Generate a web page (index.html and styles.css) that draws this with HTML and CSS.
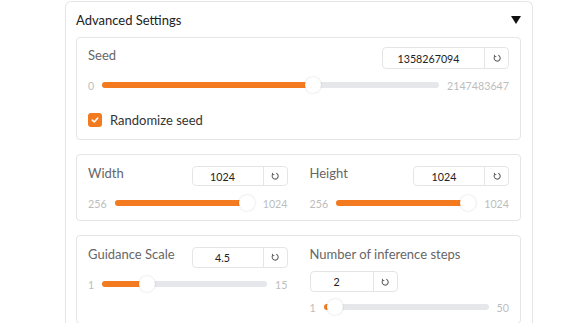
FILE: index.html
```html
<!DOCTYPE html>
<html lang="en">
<head>
    <meta charset="UTF-8">
    <title>Advanced Settings</title>
    <link rel="stylesheet" href="styles.css">
</head>
<body>
    <div class="page">
        <div class="accordion">
            <!-- Accordion header -->
            <div class="accordion-head">
                <span class="accordion-title">Advanced Settings</span>
                <span class="caret"></span>
            </div>

            <!-- Seed -->
            <div class="panel panel-seed">
                <div class="field-head">
                    <span class="field-label">Seed</span>
                    <div class="number-box">
                        <span class="number-value value-seed">1358267094</span>
                        <span class="reset-btn">
                            <svg width="8" height="8" viewBox="0 0 8 8"><path d="M5.2 1.3 A3 3 0 1 1 1.6 2.6 M1.4 0.9 L1.6 2.7 L3.3 2.5"/></svg>
                        </span>
                    </div>
                </div>
                <div class="slider">
                    <span class="slider-min">0</span>
                    <div class="track" style="--p: 0.6325">
                        <div class="fill"></div>
                        <span class="thumb"></span>
                    </div>
                    <span class="slider-max">2147483647</span>
                </div>
                <label class="checkbox-row">
                    <span class="checkbox">
                        <svg width="10" height="10" viewBox="0 0 10 10"><path d="M2.3 5.2 L4.2 7 L7.8 3"/></svg>
                    </span>
                    Randomize seed
                </label>
            </div>

            <!-- Width / Height -->
            <div class="panel panel-size">
                <div class="panel-row">
                    <div class="field">
                        <div class="field-head">
                            <span class="field-label">Width</span>
                            <div class="number-box small">
                                <span class="number-value value-size">1024</span>
                                <span class="reset-btn">
                                    <svg width="8" height="8" viewBox="0 0 8 8"><path d="M5.2 1.3 A3 3 0 1 1 1.6 2.6 M1.4 0.9 L1.6 2.7 L3.3 2.5"/></svg>
                                </span>
                            </div>
                        </div>
                        <div class="slider">
                            <span class="slider-min">256</span>
                            <div class="track" style="--p: 1">
                                <div class="fill"></div>
                                <span class="thumb"></span>
                            </div>
                            <span class="slider-max">1024</span>
                        </div>
                    </div>
                    <div class="field">
                        <div class="field-head">
                            <span class="field-label">Height</span>
                            <div class="number-box small">
                                <span class="number-value value-size">1024</span>
                                <span class="reset-btn">
                                    <svg width="8" height="8" viewBox="0 0 8 8"><path d="M5.2 1.3 A3 3 0 1 1 1.6 2.6 M1.4 0.9 L1.6 2.7 L3.3 2.5"/></svg>
                                </span>
                            </div>
                        </div>
                        <div class="slider">
                            <span class="slider-min">256</span>
                            <div class="track" style="--p: 1">
                                <div class="fill"></div>
                                <span class="thumb"></span>
                            </div>
                            <span class="slider-max">1024</span>
                        </div>
                    </div>
                </div>
            </div>

            <!-- Guidance / Steps -->
            <div class="panel panel-steps">
                <div class="panel-row">
                    <div class="field">
                        <div class="field-head">
                            <span class="field-label">Guidance Scale</span>
                            <div class="number-box mid">
                                <span class="number-value value-size">4.5</span>
                                <span class="reset-btn">
                                    <svg width="8" height="8" viewBox="0 0 8 8"><path d="M5.2 1.3 A3 3 0 1 1 1.6 2.6 M1.4 0.9 L1.6 2.7 L3.3 2.5"/></svg>
                                </span>
                            </div>
                        </div>
                        <div class="slider">
                            <span class="slider-min">1</span>
                            <div class="track" style="--p: 0.25">
                                <div class="fill"></div>
                                <span class="thumb"></span>
                            </div>
                            <span class="slider-max">15</span>
                        </div>
                    </div>
                    <div class="field">
                        <div class="field-head stacked">
                            <span class="field-label">Number of inference steps</span>
                            <div class="number-box mid">
                                <span class="number-value value-steps">2</span>
                                <span class="reset-btn">
                                    <svg width="8" height="8" viewBox="0 0 8 8"><path d="M5.2 1.3 A3 3 0 1 1 1.6 2.6 M1.4 0.9 L1.6 2.7 L3.3 2.5"/></svg>
                                </span>
                            </div>
                        </div>
                        <div class="slider slider-stacked">
                            <span class="slider-min">1</span>
                            <div class="track" style="--p: 0.0204">
                                <div class="fill"></div>
                                <span class="thumb"></span>
                            </div>
                            <span class="slider-max">50</span>
                        </div>
                    </div>
                </div>
            </div>
        </div>
    </div>
</body>
</html>
```
FILE: styles.css
```css
:root {
    --orange: #f47a1f;
    --border: #e5e5e5;
    --track: #e5e7eb;
    --label: #666;
    --text: #222;
    --muted: #bdbdbd;
}

* {
    margin: 0;
    padding: 0;
    box-sizing: border-box;
}

body {
    font-family: Lato, "Liberation Sans", sans-serif;
    background: #fff;
    color: var(--text);
}

.page {
    padding: 1px 0 0 65px;
}

/* Accordion */
.accordion {
    width: 468px;
    border: 1px solid var(--border);
    border-bottom: none;
    border-radius: 6px 6px 0 0;
    padding: 8px 11px 0 10px;
}

.accordion-head {
    display: flex;
    justify-content: space-between;
    align-items: center;
    height: 20px;
    margin-bottom: 7px;
}

.accordion-title {
    font-size: 13px;
    line-height: 20px;
    color: #222;
}

.caret {
    width: 0;
    height: 0;
    border-left: 5px solid transparent;
    border-right: 5px solid transparent;
    border-top: 8px solid #111;
}

/* Panels */
.panel {
    border: 1px solid var(--border);
    border-radius: 4px;
    padding: 10px 11px 9px;
}

.panel + .panel {
    margin-top: 14px;
}

.panel-seed {
    padding-top: 9px;
}

.panel-steps {
    padding-bottom: 8px;
}

.panel-row {
    display: grid;
    grid-template-columns: 1fr 1fr;
    column-gap: 22px;
}

.field-head {
    display: flex;
    justify-content: space-between;
    align-items: center;
    height: 22px;
}

.field-label {
    align-self: flex-start;
    font-size: 13px;
    line-height: 16px;
    color: var(--label);
}

.field-head.stacked {
    flex-direction: column;
    align-items: flex-start;
    height: auto;
}

.field-head.stacked .field-label {
    height: 22px;
}

.field-head.stacked .number-box {
    margin-top: 3px;
}

/* Number input + reset */
.number-box {
    display: flex;
    height: 22px;
    border: 1px solid var(--border);
    border-radius: 4px;
    background: #fff;
}

.number-box.small {
    height: 20px;
}

.number-box.mid {
    height: 21px;
}

.number-value {
    display: flex;
    align-items: center;
    justify-content: center;
    padding-right: 10px;
    font-size: 10.7px;
    color: var(--text);
}

.value-seed {
    width: 101px;
}

.value-size {
    width: 70px;
}

.value-steps {
    width: 62px;
}

.reset-btn {
    width: 24px;
    display: flex;
    align-items: center;
    justify-content: center;
    border-left: 1px solid var(--border);
}

.reset-btn svg {
    fill: none;
    stroke: #666;
    stroke-width: 1.1;
}

/* Slider */
.slider {
    display: flex;
    align-items: center;
    gap: 8px;
    height: 16px;
    margin-top: 8px;
}

.slider-stacked {
    margin-top: 7px;
}

.slider-min,
.slider-max {
    font-size: 10.7px;
    color: var(--muted);
}

.track {
    position: relative;
    flex: 1;
    height: 6px;
    border-radius: 3px;
    background: var(--track);
}

.fill {
    width: calc(8px + var(--p) * (100% - 16px));
    height: 100%;
    border-radius: 3px;
    background: var(--orange);
}

.thumb {
    position: absolute;
    top: 50%;
    left: calc(8px + var(--p) * (100% - 16px));
    width: 16px;
    height: 16px;
    margin: -8px 0 0 -8px;
    border-radius: 50%;
    background: #fff;
    box-shadow: 0 0 2px rgba(0, 0, 0, 0.18);
}

/* Checkbox */
.checkbox-row {
    display: flex;
    align-items: center;
    gap: 8px;
    margin-top: 17px;
    font-size: 13px;
    line-height: 20px;
    color: #333;
}

.checkbox {
    width: 14px;
    height: 14px;
    border-radius: 3px;
    background: var(--orange);
    display: flex;
    align-items: center;
    justify-content: center;
}

.checkbox svg {
    fill: none;
    stroke: #fff;
    stroke-width: 1.6;
    stroke-linecap: round;
    stroke-linejoin: round;
}
```
